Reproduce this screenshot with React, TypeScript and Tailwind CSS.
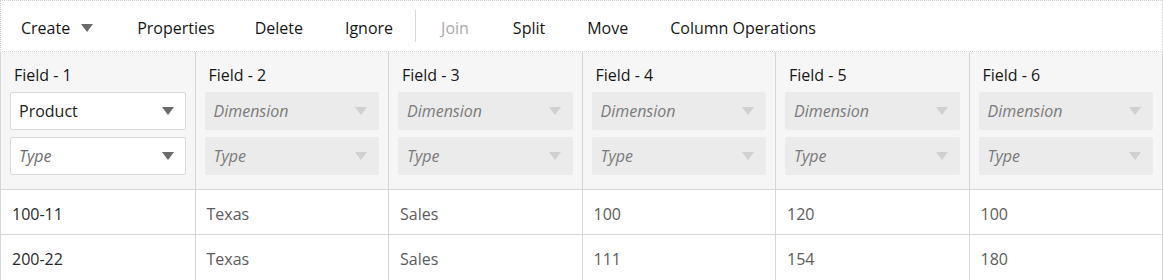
import { Fragment } from "react";

const rows = [
  ["100-11", "Texas", "Sales", "100", "120", "100"],
  ["200-22", "Texas", "Sales", "111", "154", "180"],
];

function Caret({ light }: { light?: boolean }) {
  return (
    <svg width="12" height="8" viewBox="0 0 12 8" className="shrink-0">
      <path d="M0 0h12L6 8z" fill={light ? "#d0d0d0" : "#6b6b6b"} />
    </svg>
  );
}

function Select({ label, italic, disabled }: { label: string; italic?: boolean; disabled?: boolean }) {
  return (
    <div
      className={
        "h-[38px] flex items-center justify-between pl-2 pr-[11px] rounded-[2px] " +
        (disabled ? "bg-[#ebebeb] border border-[#ebebeb]" : "bg-white border border-[#dadada]")
      }
    >
      <span className={(italic ? "italic " : "") + (disabled ? "text-[#7a7a7a]" : italic ? "text-[#6e6e6e]" : "text-[#222]")}>
        {label}
      </span>
      <Caret light={disabled} />
    </div>
  );
}

export default function App() {
  return (
    <div className="w-[1163px] h-[280px] bg-white text-[16px] text-[#161616] font-['Open_Sans',sans-serif] overflow-hidden">
      <div className="h-[52px] flex items-center pl-5 pt-1 border border-dotted border-[#cfcfcf] border-b-[#d6d6d6]">
        <button className="flex items-center gap-[11px] pr-[44px]">
          Create <Caret />
        </button>
        <button className="pr-5">Properties</button>
        <button className="pl-5 pr-[22px]">Delete</button>
        <button className="pl-5 pr-[22px]">Ignore</button>
        <div className="w-px h-8 bg-[#d8d8d8] mr-1 -mt-1" />
        <button className="pl-[21px] pr-[22px] text-[#aaa]">Join</button>
        <button className="pl-[22px] pr-[21px]">Split</button>
        <button className="px-[21px]">Move</button>
        <button className="pl-[21px]">Column Operations</button>
      </div>
      <div className="grid grid-cols-6 border-x border-b border-[#d6d6d6]">
        {[1, 2, 3, 4, 5, 6].map((n) => (
          <div key={n} className={"bg-[#f6f6f6] h-[138px] px-[9px] pt-[10px] border-b border-[#d6d6d6] " + (n > 1 ? "border-l" : "")}>
            <div className="pl-1 h-[27px] leading-[27px]">Field - {n}</div>
            <div className="mt-[3px] flex flex-col gap-[7px]">
              <Select label={n === 1 ? "Product" : "Dimension"} italic={n > 1} disabled={n > 1} />
              <Select label="Type" italic disabled={n > 1} />
            </div>
          </div>
        ))}
        {rows.map((r, i) => (
          <Fragment key={i}>
            {r.map((c, j) => (
              <div
                key={j}
                className={
                  "h-[45px] flex items-center pl-[11px] pt-[3px] " +
                  (j > 0 ? "border-l border-[#d6d6d6] text-[#5c5c5c] " : "text-[#2a2a2a] ") +
                  (i === 0 ? "border-b border-[#d6d6d6]" : "")
                }
              >
                {c}
              </div>
            ))}
          </Fragment>
        ))}
      </div>
    </div>
  );
}
